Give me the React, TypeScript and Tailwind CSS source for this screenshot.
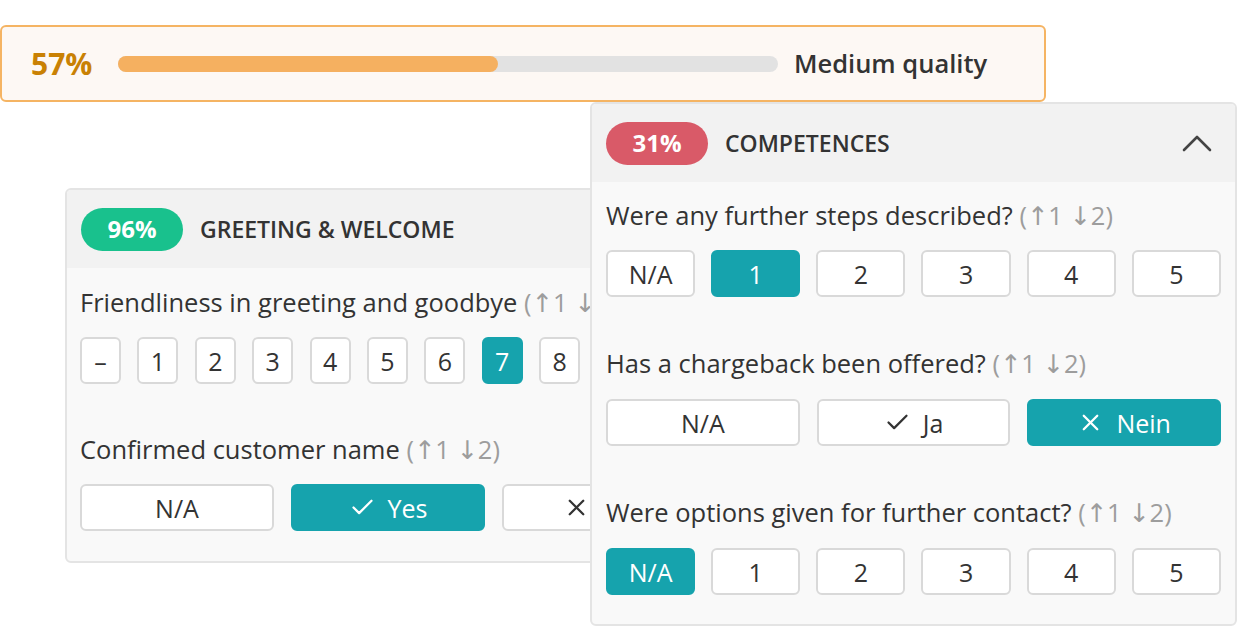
import { Check, X } from "lucide-react";

const font = { fontFamily: '"Open Sans", "DejaVu Sans", sans-serif' };

function Hint() {
  return <span className="text-[#9d9d9d]"> (↑1 ↓2)</span>;
}

function Btn({ label, active, wide, icon }: { label: string; active?: boolean; wide?: boolean; icon?: "check" | "x" }) {
  return (
    <div
      className={
        "flex h-[47px] items-center justify-center gap-3 rounded-[6px] border-2 text-[25px] " +
        (wide ? "w-[194px] shrink-0 " : "") +
        (active ? "border-[#16a3ad] bg-[#16a3ad] text-white" : "border-[#d9d9d9] bg-white text-[#333]")
      }
    >
      {icon === "check" && <Check size={27} strokeWidth={2} />}
      {icon === "x" && <X size={27} strokeWidth={2} />}
      {label}
    </div>
  );
}

function Header({ pct, color, title, chevron }: { pct: string; color: string; title: string; chevron?: boolean }) {
  return (
    <div className="flex h-[78px] items-center bg-[#f2f2f2] px-[14px]">
      <div className={"flex h-[43px] w-[102px] items-center justify-center rounded-full text-[24px] font-bold text-white " + color}>{pct}</div>
      <div className="ml-[17px] flex-1 text-[23px] font-semibold text-[#333]">{title}</div>
      {chevron && (
        <svg width="32" height="20" viewBox="0 0 32 20" className="mr-[8px] text-[#444]">
          <polyline points="3,17 16,4 29,17" fill="none" stroke="currentColor" strokeWidth="2.6" strokeLinecap="round" strokeLinejoin="round" />
        </svg>
      )}
    </div>
  );
}

export default function App() {
  return (
    <div className="relative h-[627px] w-[1237px] overflow-hidden bg-white text-[#333]" style={font}>
      <div className="mt-[25px] flex h-[77px] w-[1046px] items-center rounded-[6px] border-2 border-[#f5b463] bg-[#fdf8f4] pl-[29px]">
        <div className="w-[87px] text-[30px] font-bold text-[#c98104]">57%</div>
        <div className="h-[16px] w-[660px] rounded-full bg-[#e2e2e2]">
          <div className="h-full rounded-full bg-[#f5b060]" style={{ width: "57.5%" }} />
        </div>
        <div className="ml-[16px] text-[25.5px] font-semibold text-[#333]">Medium quality</div>
      </div>

      <div className="absolute left-[65px] top-[188px] w-[640px] overflow-hidden rounded-[6px] border-2 border-[#e4e4e4] bg-[#f9f9f9]">
        <Header pct="96%" color="bg-[#19c18d]" title="GREETING & WELCOME" />
        <div className="px-[13px] pb-[30px] pt-[17px] text-[25.5px] leading-[34px]">
          <div className="whitespace-nowrap">Friendliness in greeting and goodbye<Hint /></div>
          <div className="mt-[18px] flex gap-[16.4px]">
            {["–", "1", "2", "3", "4", "5", "6", "7", "8", "9"].map((n) => (
              <div key={n} className="w-[41px] shrink-0">
                <Btn label={n} active={n === "7"} />
              </div>
            ))}
          </div>
          <div className="mt-[48px] whitespace-nowrap">Confirmed customer name<Hint /></div>
          <div className="mt-[18px] flex gap-[17px]">
            <Btn label="N/A" wide />
            <Btn label="Yes" wide active icon="check" />
            <Btn label="No" wide icon="x" />
          </div>
        </div>
      </div>

      <div className="absolute left-[590px] top-[102px] w-[647px] overflow-hidden rounded-[6px] border-2 border-[#e4e4e4] bg-[#f9f9f9]">
        <Header pct="31%" color="bg-[#d95a68]" title="COMPETENCES" chevron />
        <div className="px-[14px] pb-[29px] pt-[16px] text-[25.5px] leading-[34px]">
          <div>Were any further steps described?<Hint /></div>
          <div className="mt-[18px] grid grid-cols-6 gap-[16px]">
            {["N/A", "1", "2", "3", "4", "5"].map((n) => (
              <Btn key={n} label={n} active={n === "1"} />
            ))}
          </div>
          <div className="mt-[49px]">Has a chargeback been offered?<Hint /></div>
          <div className="mt-[19px] grid grid-cols-3 gap-[17px]">
            <Btn label="N/A" />
            <Btn label="Ja" icon="check" />
            <Btn label="Nein" icon="x" active />
          </div>
          <div className="mt-[49px]">Were options given for further contact?<Hint /></div>
          <div className="mt-[19px] grid grid-cols-6 gap-[16px]">
            {["N/A", "1", "2", "3", "4", "5"].map((n) => (
              <Btn key={n} label={n} active={n === "N/A"} />
            ))}
          </div>
        </div>
      </div>
    </div>
  );
}
